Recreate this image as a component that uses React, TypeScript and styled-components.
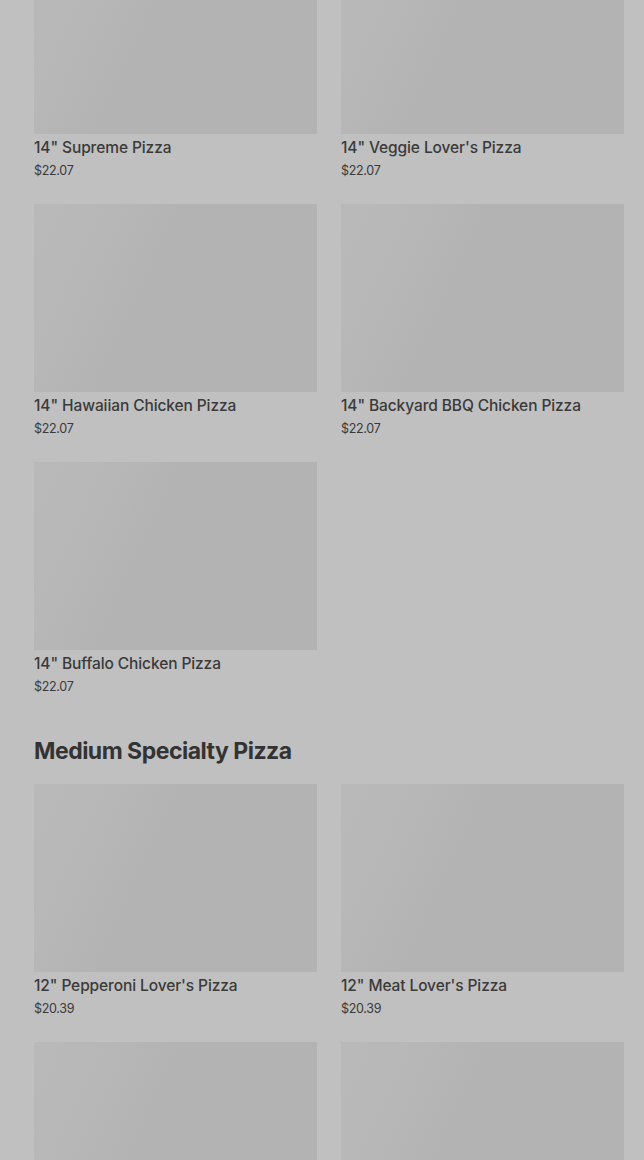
import React from "react";
import styled, { createGlobalStyle } from "styled-components";

const GlobalStyle = createGlobalStyle`
  html, body {
    margin: 0;
    padding: 0;
    background: #c0c0c0;
  }
  body {
    font-family: Inter, "Noto Sans", "Liberation Sans", sans-serif;
    color: #3a3a3a;
  }
`;

const SPage = styled.div`
  width: 644px;
  background: #c0c0c0;
`;

const SContent = styled.div`
  margin-top: -54px;
  padding: 0 20px 0 34px;
`;

const SSection = styled.section`
  display: flex;
  flex-direction: column;
`;

const SHeading = styled.h2`
  margin: 40px 0 19px;
  font-size: 23px;
  line-height: 28px;
  font-weight: 700;
  letter-spacing: -0.5px;
  color: #333333;
`;

const SGrid = styled.div`
  display: grid;
  grid-template-columns: 283px 283px;
  column-gap: 24px;
  row-gap: 23px;
`;

const SCard = styled.div`
  display: flex;
  flex-direction: column;
`;

const SImage = styled.div`
  height: 188px;
  background: linear-gradient(
    115deg,
    #b9b9b9 0%,
    #b7b7b7 22%,
    #b3b3b3 40%,
    #b3b3b3 100%
  );
`;

const STitle = styled.div`
  margin-top: 4px;
  font-size: 15.5px;
  line-height: 20px;
  font-weight: 500;
  letter-spacing: -0.1px;
  color: #3a3a3a;
  white-space: nowrap;
`;

const SPrice = styled.div`
  margin-top: 3px;
  font-size: 12.5px;
  line-height: 20px;
  letter-spacing: -0.3px;
  color: #3a3a3a;
`;

type Item = { name: string; price: string };

const LARGE: Item[] = [
  { name: `14" Supreme Pizza`, price: "$22.07" },
  { name: `14" Veggie Lover's Pizza`, price: "$22.07" },
  { name: `14" Hawaiian Chicken Pizza`, price: "$22.07" },
  { name: `14" Backyard BBQ Chicken Pizza`, price: "$22.07" },
  { name: `14" Buffalo Chicken Pizza`, price: "$22.07" },
];

const MEDIUM: Item[] = [
  { name: `12" Pepperoni Lover's Pizza`, price: "$20.39" },
  { name: `12" Meat Lover's Pizza`, price: "$20.39" },
  { name: `12" Supreme Pizza`, price: "$20.39" },
  { name: `12" Veggie Lover's Pizza`, price: "$20.39" },
];

const Card = ({ item }: { item: Item }) => (
  <SCard>
    <SImage />
    <STitle>{item.name}</STitle>
    <SPrice>{item.price}</SPrice>
  </SCard>
);

const App = () => (
  <SPage>
    <GlobalStyle />
    <SContent>
      <SSection>
        <SGrid>
          {LARGE.map(item => (
            <Card key={item.name} item={item} />
          ))}
        </SGrid>
      </SSection>
      <SSection>
        <SHeading>Medium Specialty Pizza</SHeading>
        <SGrid>
          {MEDIUM.map(item => (
            <Card key={item.name} item={item} />
          ))}
        </SGrid>
      </SSection>
    </SContent>
  </SPage>
);

export default App;
